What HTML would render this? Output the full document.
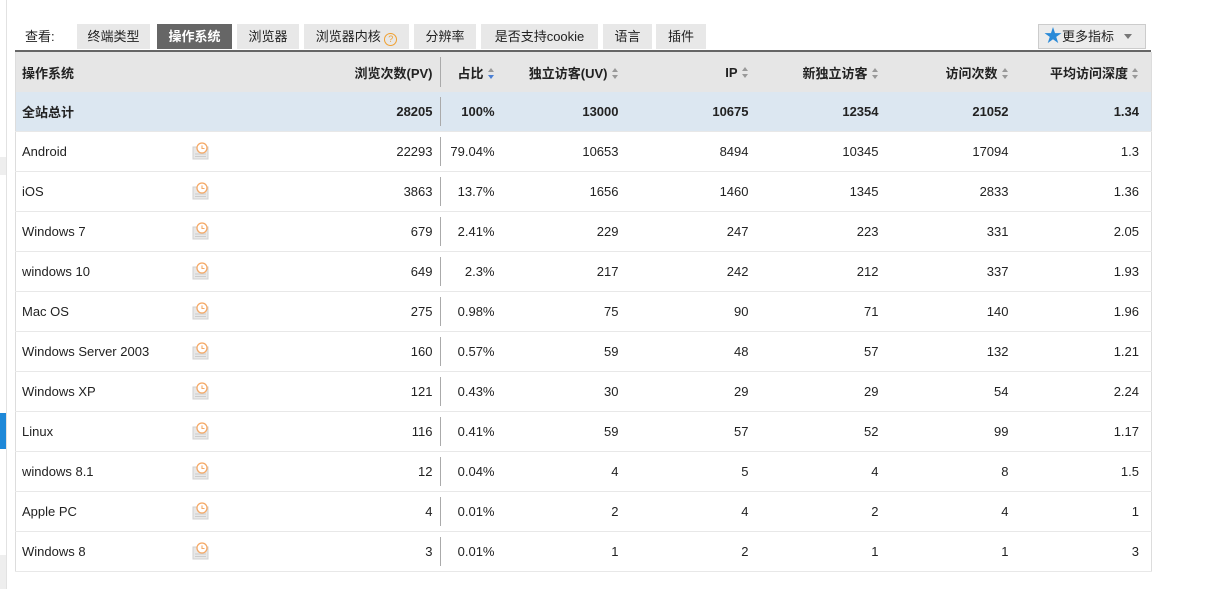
<!DOCTYPE html>
<html><head><meta charset="utf-8"><style>
body{margin:0;width:1206px;height:589px;background:#fff;font-family:"Liberation Sans","Noto Sans CJK SC",sans-serif;font-size:13px;color:#222;position:relative;overflow:hidden}
.tabs{position:absolute;top:24px;left:15px;height:25px}
.tab{position:absolute;top:0;height:25px;line-height:25px;background:#e8e8e8;text-align:center;font-size:13px;color:#222;white-space:nowrap}
.tab.on{background:#666;color:#fff;font-weight:bold}
.line{position:absolute;left:15px;top:50px;width:1136px;height:2px;background:#666}
table{position:absolute;left:15px;width:1136px;border-collapse:collapse;border-left:1px solid #ddd;border-right:1px solid #ddd;table-layout:fixed}
td{height:39px;border-bottom:1px solid #e8e8e8;padding:0;text-align:right;font-size:13px;white-space:nowrap;vertical-align:middle}
tr.h td{background:#e6e6e6;font-weight:bold;height:40px;border:none}
tr.t td{background:#dce7f1;font-weight:bold;height:39px}
td.n{text-align:left;padding-left:6px}
.s{display:inline-block;width:7px;height:11px;margin-left:4px;vertical-align:-1px;position:relative}
.s:before{content:"";position:absolute;top:0;left:0;border:3.5px solid transparent;border-bottom:4px solid #999;border-top:0}
.s:after{content:"";position:absolute;bottom:0;left:0;border:3.5px solid transparent;border-top:4px solid #999;border-bottom:0}
.s.b:after{border-top-color:#4a7fd4}
.c1{padding-right:8px!important;position:relative}.c2{padding-right:6px!important}.c3,.c4,.c5,.c6{padding-right:5px!important}.c7{padding-right:12px!important}
.c1:after{content:"";position:absolute;right:0;top:5px;bottom:5px;width:1px;background:#aaa}
</style></head><body>
<div style="position:absolute;left:6px;top:0;width:1px;height:589px;background:#e2e2e2"></div>
<div style="position:absolute;left:0;top:157px;width:6px;height:18px;background:#eee"></div>
<div style="position:absolute;left:0;top:413px;width:6px;height:36px;background:#1e88d8"></div>
<div style="position:absolute;left:0;top:555px;width:6px;height:34px;background:#eee"></div>
<div class="tabs">
<div style="position:absolute;left:10px;top:0;line-height:25px;white-space:nowrap">查看:</div>
<div class="tab" style="left:62px;width:73px">终端类型</div>
<div class="tab on" style="left:142px;width:75px">操作系统</div>
<div class="tab" style="left:222px;width:62px">浏览器</div>
<div class="tab" style="left:289px;width:105px">浏览器内核 <span style="display:inline-block;width:11px;height:11px;border:1px solid #f0a030;border-radius:50%;font-size:9px;line-height:11px;color:#f0a030;vertical-align:-1px">?</span></div>
<div class="tab" style="left:399px;width:62px">分辨率</div>
<div class="tab" style="left:466px;width:117px">是否支持cookie</div>
<div class="tab" style="left:588px;width:49px">语言</div>
<div class="tab" style="left:641px;width:50px">插件</div>
</div>
<div style="position:absolute;left:1038px;top:24px;width:106px;height:23px;border:1px solid #ccc;background:#ececec;line-height:23px;font-size:13px;white-space:nowrap"><span style="color:#2a8ad8;font-size:18px;margin-left:5px;vertical-align:-1px">★</span>更多指标<span style="display:inline-block;margin-left:10px;border:4px solid transparent;border-top:5px solid #777;border-bottom:0;vertical-align:2px"></span></div>
<div class="line"></div>
<table style="top:52px">
<colgroup><col style="width:170px"><col style="width:255px"><col style="width:60px"><col style="width:123px"><col style="width:130px"><col style="width:130px"><col style="width:130px"><col style="width:138px"></colgroup>
<tr class="h"><td class="n">操作系统</td><td class="c1">浏览次数(PV)</td><td class="c2">占比<span class="s b"></span></td><td class="c3">独立访客(UV)<span class="s"></span></td><td class="c4">IP<span class="s"></span></td><td class="c5">新独立访客<span class="s"></span></td><td class="c6">访问次数<span class="s"></span></td><td class="c7">平均访问深度<span class="s"></span></td></tr>
<tr class="t"><td class="n">全站总计</td><td class="c1">28205</td><td class="c2">100%</td><td class="c3">13000</td><td class="c4">10675</td><td class="c5">12354</td><td class="c6">21052</td><td class="c7">1.34</td></tr>
</table>
<table id="b" style="top:132px">
<colgroup><col style="width:170px"><col style="width:255px"><col style="width:60px"><col style="width:123px"><col style="width:130px"><col style="width:130px"><col style="width:130px"><col style="width:138px"></colgroup>
</table>
<script>
var d=[["Android",22293,"79.04%",10653,8494,10345,17094,"1.3"],["iOS",3863,"13.7%",1656,1460,1345,2833,"1.36"],["Windows 7",679,"2.41%",229,247,223,331,"2.05"],["windows 10",649,"2.3%",217,242,212,337,"1.93"],["Mac OS",275,"0.98%",75,90,71,140,"1.96"],["Windows Server 2003",160,"0.57%",59,48,57,132,"1.21"],["Windows XP",121,"0.43%",30,29,29,54,"2.24"],["Linux",116,"0.41%",59,57,52,99,"1.17"],["windows 8.1",12,"0.04%",4,5,4,8,"1.5"],["Apple PC",4,"0.01%",2,4,2,4,"1"],["Windows 8",3,"0.01%",1,2,1,1,"3"]];
var ic='<svg width="17" height="18" viewBox="0 0 17 18" style="position:absolute;left:176px;top:10px"><rect x="1" y="5" width="15" height="12" fill="#e8e8e8" stroke="#d0d0d0"/><line x1="3" y1="12" x2="14" y2="12" stroke="#ccc"/><line x1="3" y1="14.5" x2="14" y2="14.5" stroke="#ccc"/><circle cx="10" cy="6" r="5" fill="#fff" stroke="#f5a865" stroke-width="1.3"/><path d="M10 3.5V6.5H12.5" fill="none" stroke="#f5a865" stroke-width="1.1"/></svg>';
var h="";d.forEach(function(r){h+='<tr><td class="n" style="position:relative">'+r[0]+ic+'</td><td class="c1">'+r[1]+'</td><td class="c2">'+r[2]+'</td><td class="c3">'+r[3]+'</td><td class="c4">'+r[4]+'</td><td class="c5">'+r[5]+'</td><td class="c6">'+r[6]+'</td><td class="c7">'+r[7]+'</td></tr>';});
document.getElementById("b").innerHTML+=h;
</script>
</body></html>
